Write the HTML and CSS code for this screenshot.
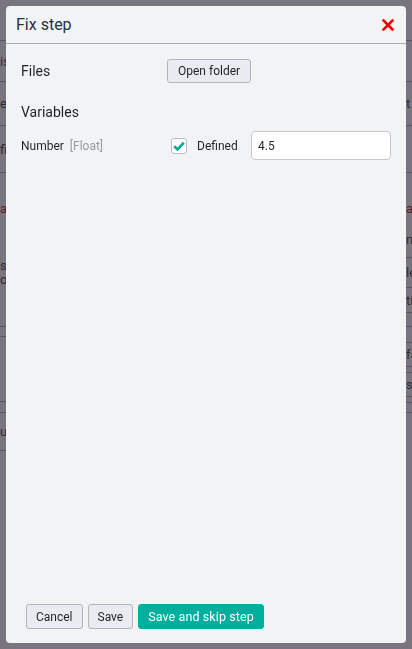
FILE: index.html
```html
<!doctype html>
<html lang="en">
<head>
  <meta charset="UTF-8">
  <title>Fix step</title>
  <link rel="stylesheet" href="styles.css">
</head>
<body>
  <div class="page">
    <div class="strip strip-left">
      <div class="bg-row h41"></div>
      <div class="bg-row h41"><span>is</span></div>
      <div class="bg-row h44"><span>e_</span></div>
      <div class="bg-row h47"><span>fil</span></div>
      <div class="bg-row h154 stack">
        <span class="red first">a</span>
        <span class="second">s\<br>o</span>
      </div>
      <div class="bg-row h10"></div>
      <div class="bg-row h65"></div>
      <div class="bg-row h11"></div>
      <div class="bg-row h38"><span>u</span></div>
    </div>
    <div class="page-main"></div>
    <div class="strip strip-right">
      <div class="bg-row h41"></div>
      <div class="bg-row h41"></div>
      <div class="bg-row h44"><span>t</span></div>
      <div class="bg-row h47"></div>
      <div class="bg-row h85 stack">
        <span class="red first">a</span>
        <span class="third">n</span>
      </div>
      <div class="bg-row h30"><span>le</span></div>
      <div class="bg-row h25"><span>ti</span></div>
      <div class="bg-row h14"></div>
      <div class="bg-row h16"></div>
      <div class="bg-row h24"><span>fa</span></div>
      <div class="bg-row h6"></div>
      <div class="bg-row h24"><span>s</span></div>
      <div class="bg-row h6"></div>
      <div class="bg-row h10"></div>
    </div>
  </div>

  <div class="backdrop"></div>

  <div class="modal">
    <div class="modal-header">
      <span class="modal-title">Fix step</span>
      <button class="close" type="button" aria-label="Close">
        <svg width="12" height="12" viewBox="0 0 12 12">
          <path d="M1.5 1.5 L10.5 10.5 M10.5 1.5 L1.5 10.5" stroke="#f00000" stroke-width="2.6" stroke-linecap="square"/>
        </svg>
      </button>
    </div>

    <div class="modal-body">
      <div class="field-row">
        <div class="section">Files</div>
        <div><button class="btn" type="button">Open folder</button></div>
      </div>

      <div class="section-title">Variables</div>

      <div class="var-row">
        <div class="var-name">Number <span class="var-type">[Float]</span></div>
        <label class="defined">
          <span class="check">
            <svg width="16" height="16" viewBox="0 0 16 16">
              <path d="M3.2 8.2 L6.6 11.4 L12.8 4.6" fill="none" stroke="#00a99b" stroke-width="2.6"/>
            </svg>
          </span>
          Defined
        </label>
        <input class="text-input" type="text" value="4.5">
      </div>
    </div>

    <div class="modal-footer">
      <button class="btn btn-footer" type="button">Cancel</button>
      <button class="btn btn-footer" type="button">Save</button>
      <button class="btn btn-footer btn-primary" type="button">Save and skip step</button>
    </div>
  </div>
</body>
</html>
```

FILE: styles.css
```css
/* page behind the dialog, mostly hidden */
body{
  margin: 0;
  font-family: Roboto, "Noto Sans", sans-serif;
  background: #ffffff;
  overflow: hidden;
}

.page{
  display: flex;
  height: 649px;
}

.page-main{
  flex: 1;
}

.strip{
  width: 6px;
  overflow: hidden;
  font-size: 13px;
  color: #484650;
}

.bg-row{
  box-sizing: border-box;
  border-bottom: 1px solid #b4b4b8;
  display: flex;
  align-items: center;
  white-space: nowrap;
  line-height: 13px;
}

.stack{
  flex-direction: column;
  align-items: flex-start;
}

.red{
  color: #cc2222;
}

.first{
  margin-top: 29px;
}

.second{
  margin-top: 44px;
  line-height: 14px;
}

.third{
  margin-top: 18px;
}

.h6{ height: 6px; }
.h10{ height: 10px; }
.h11{ height: 11px; }
.h14{ height: 14px; }
.h16{ height: 16px; }
.h24{ height: 24px; }
.h25{ height: 25px; }
.h30{ height: 30px; }
.h38{ height: 38px; }
.h41{ height: 41px; }
.h44{ height: 44px; }
.h47{ height: 47px; }
.h65{ height: 65px; }
.h85{ height: 85px; }
.h154{ height: 154px; }

.backdrop{
  position: fixed;
  inset: 0;
  background: rgba(30, 25, 40, 0.6);
}

/* dialog */
.modal{
  position: absolute;
  left: 6px;
  top: 6px;
  width: 400px;
  height: 637px;
  box-sizing: border-box;
  background: #f2f3f5;
  border-radius: 4px;
  display: flex;
  flex-direction: column;
  color: #1f2329;
}

.modal-header{
  height: 38px;
  box-sizing: border-box;
  border-bottom: 1px solid #a9abaf;
  display: flex;
  align-items: center;
  justify-content: space-between;
  padding: 0 12px 0 10px;
}

.modal-title{
  font-size: 16px;
  color: #263140;
}

.close{
  border: 0;
  background: none;
  padding: 0;
  width: 12px;
  height: 12px;
  display: flex;
}

.modal-body{
  flex: 1;
  padding: 15px 15px 0 15px;
}

.field-row{
  display: grid;
  grid-template-columns: 146px 1fr;
  align-items: center;
}

.section{
  font-size: 14px;
}

.section-title{
  font-size: 14px;
  line-height: 20px;
  margin: 19px 0 9px 0;
}

.btn{
  font-family: inherit;
  font-size: 12px;
  color: #1f2329;
  background: #e8ebef;
  border: 1px solid #b1b4b9;
  border-radius: 3px;
  height: 24px;
  padding: 0 10px;
}

.var-row{
  display: flex;
  align-items: center;
  font-size: 12px;
}

.var-name{
  width: 146px;
}

.var-type{
  color: #9a9a9e;
  margin-left: 3px;
}

.defined{
  display: flex;
  align-items: center;
  width: 80px;
  margin-left: 4px;
  gap: 10px;
}

.check{
  width: 16px;
  height: 16px;
  box-sizing: border-box;
  border: 1px solid #b8bbc0;
  border-radius: 3px;
  background: #ffffff;
  display: flex;
}

.check svg{
  margin: -1px;
}

.text-input{
  box-sizing: border-box;
  width: 140px;
  height: 29px;
  border: 1px solid #c6c8cc;
  border-radius: 4px;
  background: #ffffff;
  font-family: inherit;
  font-size: 12px;
  color: #1f2329;
  padding: 0 6px;
}

.modal-footer{
  display: flex;
  gap: 5px;
  padding: 0 20px 14px 20px;
}

.btn-footer{
  height: 25px;
  padding: 0 9px;
}

.btn-primary{
  background: #00ae9d;
  border-color: #00ae9d;
  color: #ffffff;
  font-size: 12.5px;
  letter-spacing: 0.1px;
}
```
